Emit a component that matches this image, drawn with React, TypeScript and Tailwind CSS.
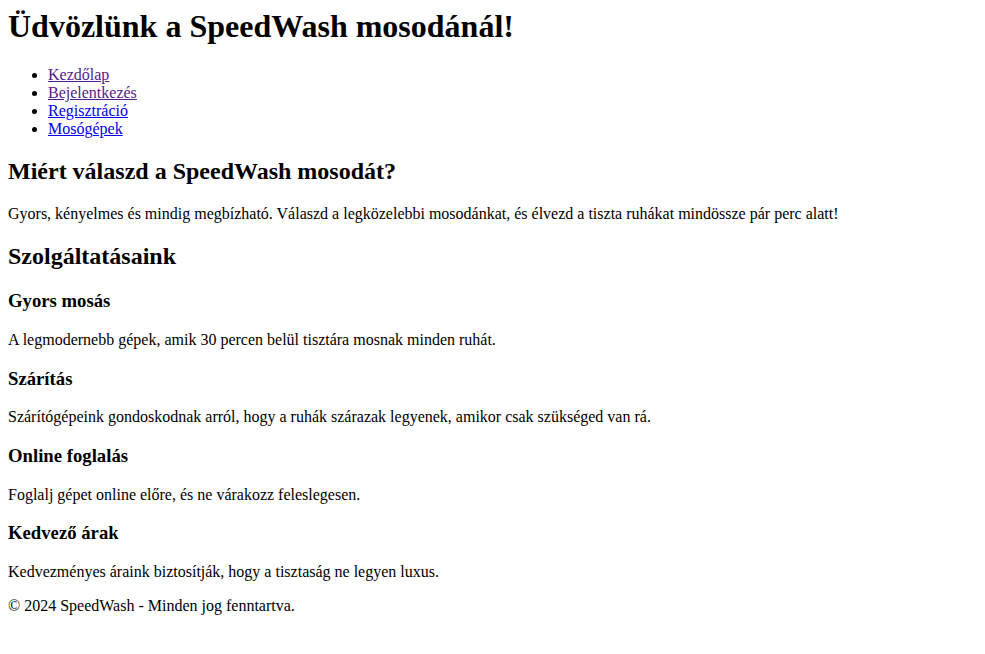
const links = [
  { label: "Kezdőlap", visited: true },
  { label: "Bejelentkezés", visited: true },
  { label: "Regisztráció", visited: false },
  { label: "Mosógépek", visited: false },
];

const services = [
  {
    title: "Gyors mosás",
    text: "A legmodernebb gépek, amik 30 percen belül tisztára mosnak minden ruhát.",
  },
  {
    title: "Szárítás",
    text: "Szárítógépeink gondoskodnak arról, hogy a ruhák szárazak legyenek, amikor csak szükséged van rá.",
  },
  {
    title: "Online foglalás",
    text: "Foglalj gépet online előre, és ne várakozz feleslegesen.",
  },
  {
    title: "Kedvező árak",
    text: "Kedvezményes áraink biztosítják, hogy a tisztaság ne legyen luxus.",
  },
];

export default function App() {
  return (
    <div className="min-h-[654px] bg-white p-2 font-['Liberation_Serif',serif] text-base leading-[normal] text-black">
      <header>
        <h1 className="mb-[21.44px] text-[32px] font-bold">Üdvözlünk a SpeedWash mosodánál!</h1>
        <nav>
          <ul className="list-disc pl-10">
            {links.map((l) => (
              <li key={l.label}>
                <a
                  href="#"
                  className={l.visited ? "text-[#551a8b] underline" : "text-[#0000ee] underline"}
                >
                  {l.label}
                </a>
              </li>
            ))}
          </ul>
        </nav>
      </header>

      <main>
        <section>
          <h2 className="my-[19.92px] text-[24px] font-bold">Miért válaszd a SpeedWash mosodát?</h2>
          <p className="my-4">
            Gyors, kényelmes és mindig megbízható. Válaszd a legközelebbi mosodánkat, és élvezd a tiszta ruhákat
            mindössze pár perc alatt!
          </p>
        </section>

        <section>
          <h2 className="my-[19.92px] text-[24px] font-bold">Szolgáltatásaink</h2>
          {services.map((s) => (
            <div key={s.title}>
              <h3 className="my-[18.72px] text-[18.72px] font-bold">{s.title}</h3>
              <p className="my-4">{s.text}</p>
            </div>
          ))}
        </section>
      </main>

      <footer>
        <p className="my-4">© 2024 SpeedWash - Minden jog fenntartva.</p>
      </footer>
    </div>
  );
}
